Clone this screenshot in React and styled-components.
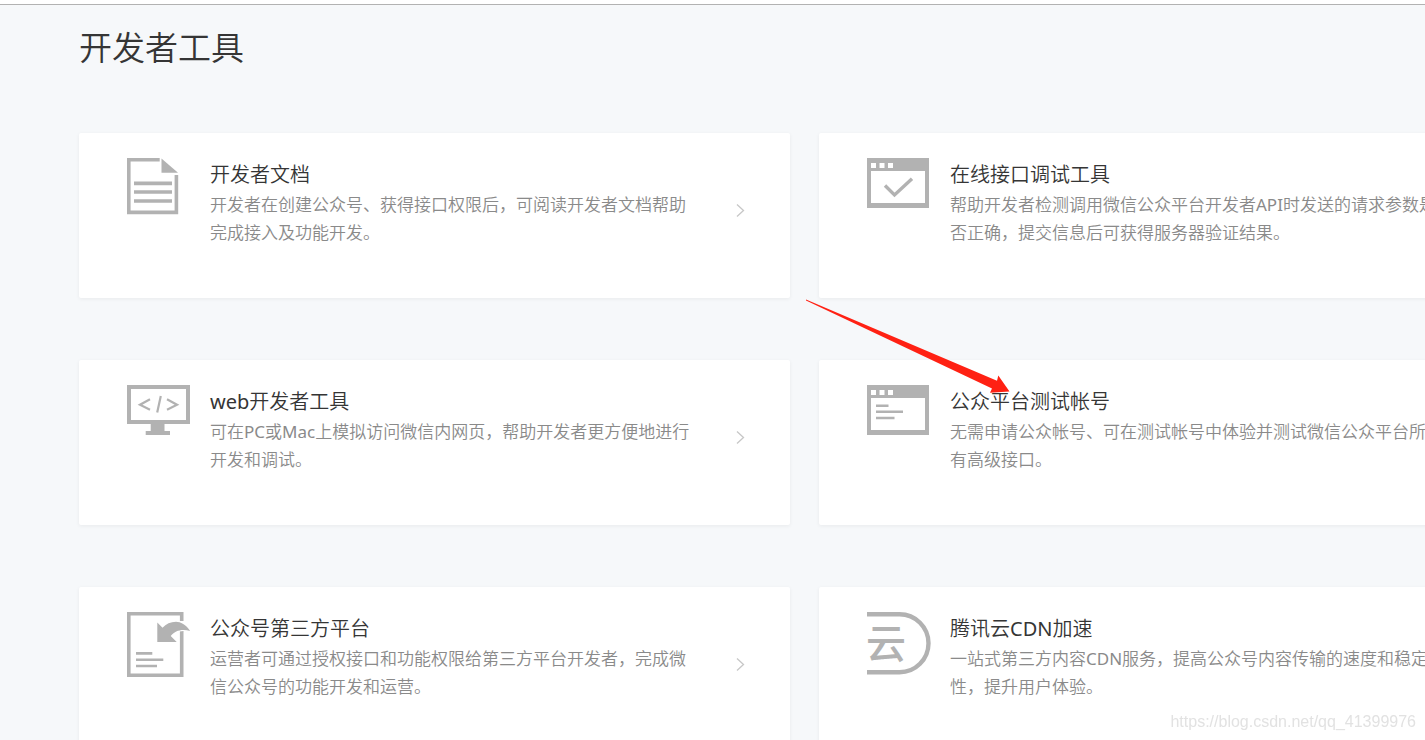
import React from "react";
import styled, { createGlobalStyle } from "styled-components";

const GlobalStyle = createGlobalStyle`
  * { box-sizing: border-box; }
  body {
    margin: 0;
    background: #f6f8fa;
    color: #353535;
    font-family: "Noto Sans", "Noto Sans CJK SC DemiLight", "Noto Sans CJK SC", sans-serif;
  }
`;

const Page = styled.div`
  height: 100vh;
  overflow: hidden;
  background: #f6f8fa;
`;

const TopBar = styled.header`
  height: 5px;
  background: #fff;
  border-bottom: 1px solid #b2b2b2;
`;

const Main = styled.main`
  min-width: 1609px;
  padding: 21px 79px 62px;
`;

const PageTitle = styled.h1`
  margin: 0 0 63px;
  font-size: 33px;
  line-height: 44px;
  font-weight: 400;
`;

const ToolGrid = styled.div`
  position: relative;
  display: grid;
  grid-template-columns: repeat(2, minmax(711px, 1fr));
  gap: 62px 29px;
`;

const Card = styled.a`
  display: flex;
  align-items: flex-start;
  min-height: 165px;
  padding: 25px 45px 25px 48px;
  border-radius: 2px;
  background: #fff;
  box-shadow: 0 1px 4px rgba(0, 0, 0, 0.06);
  color: inherit;
  text-decoration: none;
`;

const IconBox = styled.div`
  flex: none;
  width: 83px;
  color: #b2b2b2;

  svg { display: block; }
`;

const CardText = styled.div`
  flex: 1;
  max-width: 506px;
  padding-top: 3px;
`;

const CardTitle = styled.h2`
  margin: 0 0 2px;
  font-size: 20px;
  line-height: 28px;
  font-weight: 400;
`;

const CardDescription = styled.p`
  margin: 0;
  color: #8a8a8a;
  font-size: 17px;
  line-height: 28px;
  font-weight: 400;
  white-space: nowrap;
`;

const Chevron = styled.svg`
  flex: none;
  margin: 45px 0 0 auto;
`;

const Arrow = styled.svg`
  position: absolute;
  left: 727px;
  top: 166px;
  pointer-events: none;
`;

const Watermark = styled.div`
  position: fixed;
  right: 9px;
  bottom: 8px;
  color: #e2e2e2;
  font: 16px/20px "Liberation Sans", sans-serif;
`;

function DocIcon() {
  return (
    <svg width="64" height="66" fill="none" stroke="currentColor" strokeWidth="3.6" aria-hidden="true">
      <path d="M32.700 1.800H1.800v52.600h47.600V17" />
      <path d="M34.500 .5L51 14.700H34.500z" fill="currentColor" stroke="none" />
      <path d="M7 25.400h38M7 34h38M7 43h38" />
    </svg>
  );
}

function WindowFrame({ children }) {
  return (
    <svg width="64" height="66" fill="none" stroke="currentColor" aria-hidden="true">
      <path
        d="M0 0h62v50H0zM4 13v32h54V13zM4 5v5h5V5zM12.500 5v5h5V5zM21 5v5h5V5z"
        fill="currentColor"
        fillRule="evenodd"
        stroke="none"
      />
      {children}
    </svg>
  );
}

function DebugIcon() {
  return (
    <WindowFrame>
      <path d="M18 27.500l9.500 9.500L45 20.800" strokeWidth="3.4" />
    </WindowFrame>
  );
}

function AccountIcon() {
  return (
    <WindowFrame>
      <path d="M9 20.700h12.500M9 26.800h27M9 33h18.500" strokeWidth="2.6" />
    </WindowFrame>
  );
}

function MonitorIcon() {
  return (
    <svg width="64" height="66" fill="none" stroke="currentColor" aria-hidden="true">
      <path
        d="M0 0h63v39H37.500v7H43v4H18.700v-4h5v-7H0zM4 4v31h55V4z"
        fill="currentColor"
        fillRule="evenodd"
        stroke="none"
      />
      <path d="M23 14.300L13 19.700l10 5M40 14.300l10 5.400-10 5M33.800 11l-3.600 16.500" strokeWidth="2.2" />
    </svg>
  );
}

function PlatformIcon() {
  return (
    <svg width="64" height="66" fill="none" stroke="currentColor" aria-hidden="true">
      <path d="M54.700 9V1.800H1.800v61.400h52.900V19" strokeWidth="3.6" />
      <path
        d="M30.300 10.500v19.600h19.400l-6-6c4-5.800 12-7.500 19.500-5.100C59 12.500 53.500 9.700 49 9.700c-5.500 0-10 2.300-13.500 6z"
        fill="currentColor"
        stroke="#fff"
        strokeWidth="2"
        paintOrder="stroke"
      />
      <path d="M9 41.400h16.300M9 47.700h27.300M9 54h21" strokeWidth="2.6" />
    </svg>
  );
}

const CloudGlyph = styled.text`
  font: 500 40px "Noto Sans CJK SC", sans-serif;
`;

function CloudIcon() {
  return (
    <svg width="64" height="66" fill="none" aria-hidden="true">
      <path d="M-1 2.200H32.500a29 29 0 0 1 0 58H-1" stroke="currentColor" strokeWidth="4.4" />
      <CloudGlyph x="-1" y="46" fill="currentColor">云</CloudGlyph>
    </svg>
  );
}

const tools = [
  {
    title: "开发者文档",
    icon: DocIcon,
    lines: ["开发者在创建公众号、获得接口权限后，可阅读开发者文档帮助", "完成接入及功能开发。"],
  },
  {
    title: "在线接口调试工具",
    icon: DebugIcon,
    lines: ["帮助开发者检测调用微信公众平台开发者API时发送的请求参数是", "否正确，提交信息后可获得服务器验证结果。"],
  },
  {
    title: "web开发者工具",
    icon: MonitorIcon,
    lines: ["可在PC或Mac上模拟访问微信内网页，帮助开发者更方便地进行", "开发和调试。"],
  },
  {
    title: "公众平台测试帐号",
    icon: AccountIcon,
    lines: ["无需申请公众帐号、可在测试帐号中体验并测试微信公众平台所", "有高级接口。"],
  },
  {
    title: "公众号第三方平台",
    icon: PlatformIcon,
    lines: ["运营者可通过授权接口和功能权限给第三方平台开发者，完成微", "信公众号的功能开发和运营。"],
  },
  {
    title: "腾讯云CDN加速",
    icon: CloudIcon,
    lines: ["一站式第三方内容CDN服务，提高公众号内容传输的速度和稳定", "性，提升用户体验。"],
  },
];

function ToolCard({ title, icon: Icon, lines }) {
  return (
    <Card href="#">
      <IconBox>
        <Icon />
      </IconBox>
      <CardText>
        <CardTitle>{title}</CardTitle>
        <CardDescription>
          {lines[0]}
          <br />
          {lines[1]}
        </CardDescription>
      </CardText>
      <Chevron width="9" height="15" fill="none" stroke="#c7c7c7" strokeWidth="1.3" aria-hidden="true">
        <path d="M1 1.500l6.500 6L1 13.500" />
      </Chevron>
    </Card>
  );
}

export default function App() {
  return (
    <Page>
      <GlobalStyle />
      <TopBar />
      <Main>
        <PageTitle>开发者工具</PageTitle>
        <ToolGrid>
          {tools.map((tool) => (
            <ToolCard key={tool.title} {...tool} />
          ))}
          <Arrow width="206" height="96" aria-hidden="true">
            <path d="M0 .5L191 81.700 192.300 76.500 203.500 92.500 184 93.700 186 89.500 0 1.500z" fill="#ff2113" />
          </Arrow>
        </ToolGrid>
      </Main>
      <Watermark>https://blog.csdn.net/qq_41399976</Watermark>
    </Page>
  );
}
